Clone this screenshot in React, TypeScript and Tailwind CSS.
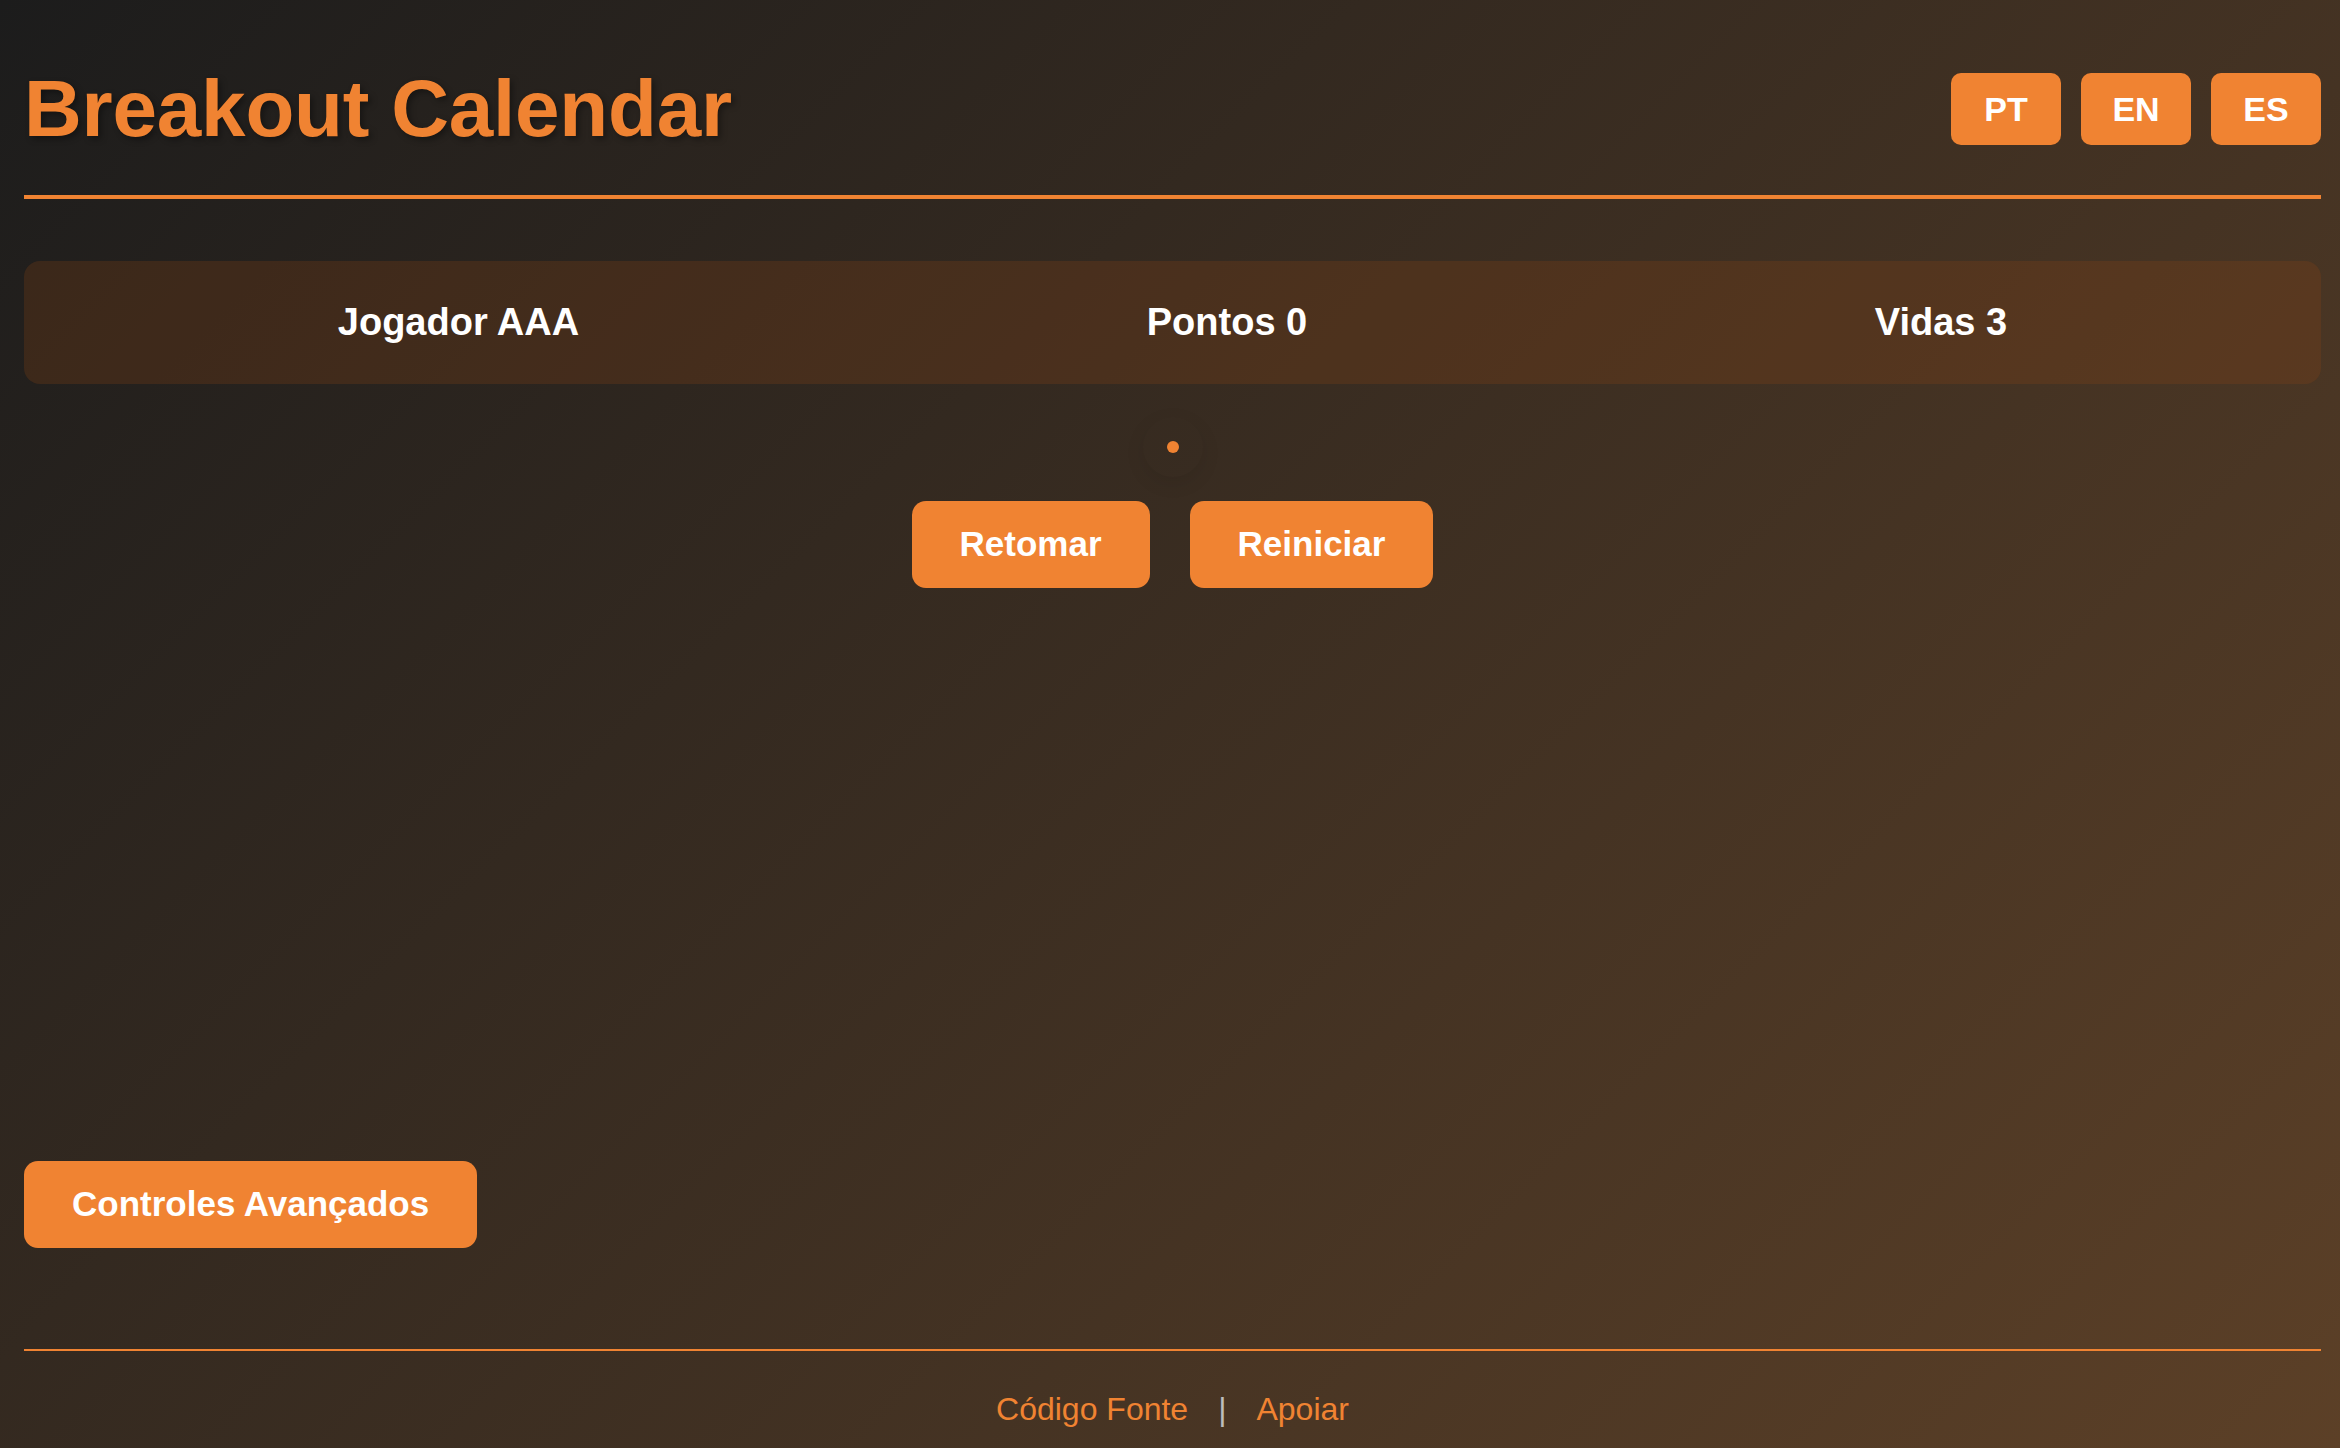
import React from "react";

const font = { fontFamily: '"Liberation Sans", Arial, Helvetica, sans-serif' };

function LangButton({ label }: { label: string }) {
  return (
    <button className="h-[72px] w-[110px] rounded-[10px] bg-[#f08332] text-[34px] font-bold text-white">
      {label}
    </button>
  );
}

function ActionButton({ label, className = "" }: { label: string; className?: string }) {
  return (
    <button
      className={`h-[87px] rounded-[14px] bg-[#f08332] px-[48px] text-[35px] font-bold text-white ${className}`}
    >
      {label}
    </button>
  );
}

export default function App() {
  return (
    <div
      style={font}
      className="flex min-h-screen w-full flex-col bg-[linear-gradient(135deg,#1c1c1c_0%,#5c4027_100%)] pl-[24px] pr-[19px]"
    >
      <header className="flex items-center justify-between border-b-[4px] border-[#f08332] pb-[40px] pt-[63px]">
        <h1 className="text-[80px] font-bold leading-[92px] tracking-[-0.2px] text-[#f08332] [text-shadow:3px_3px_6px_rgba(0,0,0,0.35)]">
          Breakout Calendar
        </h1>
        <div className="flex items-center gap-[20px]">
          <LangButton label="PT" />
          <LangButton label="EN" />
          <LangButton label="ES" />
        </div>
      </header>

      <section className="mt-[62px] flex h-[123px] items-center justify-around rounded-[16px] bg-[rgba(139,69,19,0.25)] px-[30px] text-[38px] font-bold text-white">
        <span>Jogador AAA</span>
        <span>Pontos 0</span>
        <span>Vidas 3</span>
      </section>

      <div className="mt-[57px] flex justify-center">
        <div className="relative flex h-[12px] w-[12px] items-center justify-center">
          <div className="absolute h-[60px] w-[60px] rounded-full shadow-[0_6px_20px_rgba(0,0,0,0.08)]" />
          <div className="h-[12px] w-[12px] rounded-full bg-[#f08332]" />
        </div>
      </div>

      <div className="mt-[48px] flex justify-center gap-[40px]">
        <ActionButton label="Retomar" />
        <ActionButton label="Reiniciar" />
      </div>

      <div className="mt-[573px]">
        <ActionButton label="Controles Avançados" className="px-[48px]" />
      </div>

      <footer className="mt-[101px] border-t-[2px] border-[#f08332] pb-[20px] pt-[40px] text-center text-[32px] leading-[37px]">
        <span className="text-[#f08332]">Código Fonte</span>
        <span className="mx-[30px] text-[#bdbdbd]">|</span>
        <span className="text-[#f08332]">Apoiar</span>
      </footer>
    </div>
  );
}
